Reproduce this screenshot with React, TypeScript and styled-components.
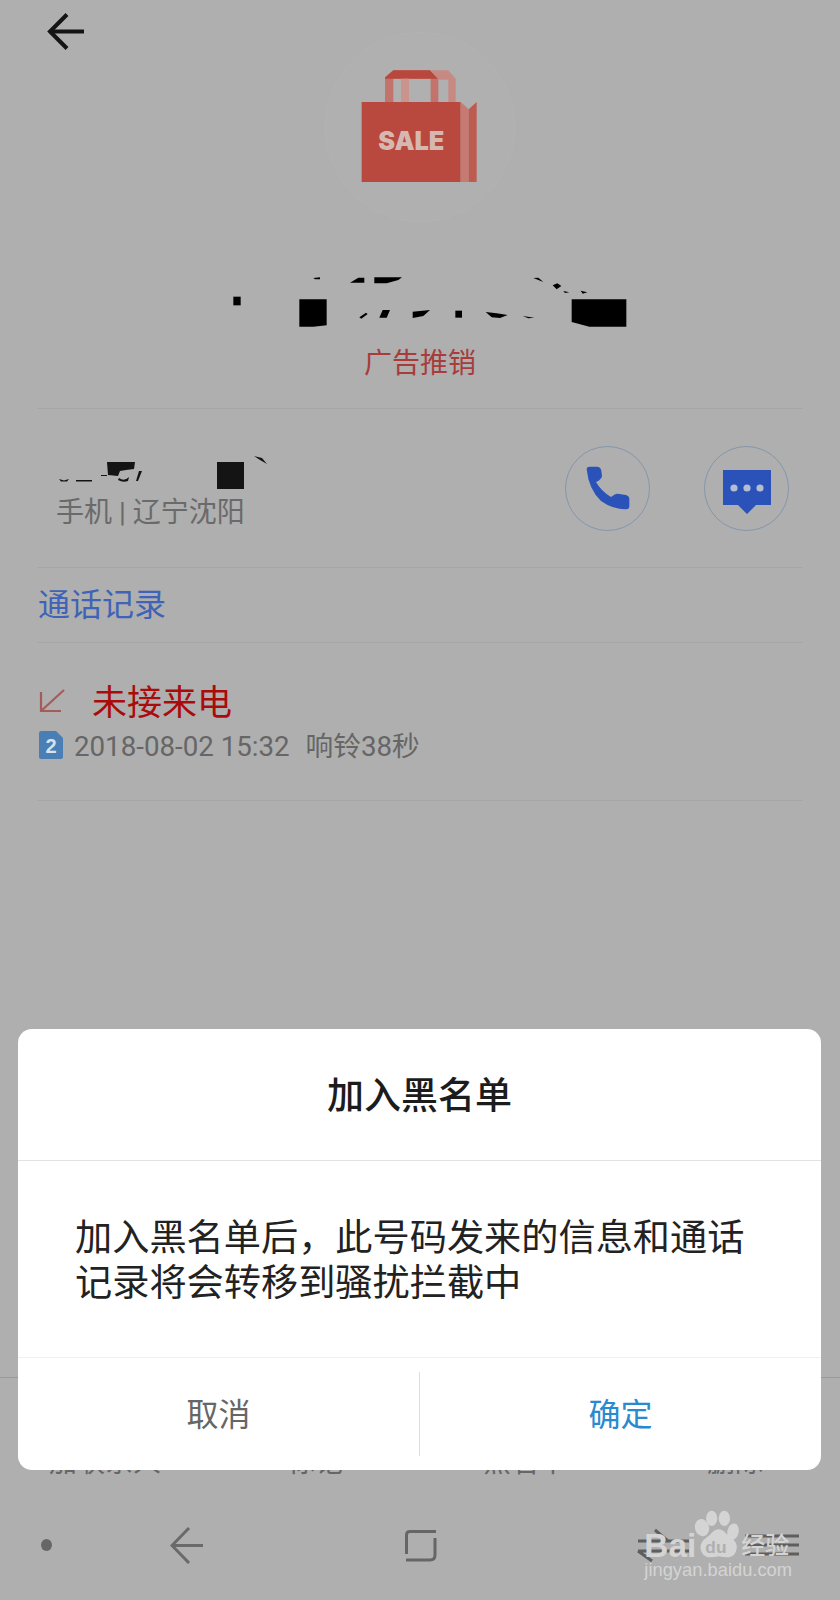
import styled, { createGlobalStyle } from "styled-components";

const GlobalStyle = createGlobalStyle`
  html, body {
    margin: 0;
    padding: 0;
    background: #afafaf;
  }
  * {
    box-sizing: border-box;
  }
`;

const CJK = `Roboto, "Noto Sans CJK SC", sans-serif`;

const Page = styled.div`
  position: relative;
  width: 840px;
  height: 1600px;
  overflow: hidden;
  display: flex;
  flex-direction: column;
  background: #afafaf;
  font-family: ${CJK};
`;
const Hero = styled.header`
  height: 409px;
  margin: 0 37px;
  border-bottom: 1px solid #a6a6a6;
  display: grid;
  grid-template-columns: 1fr 190px 1fr;
  grid-template-rows: 222px 80px auto;
  justify-items: center;
`;
const BackButton = styled.div`
  justify-self: start;
  margin: 13px 0 0 10px;
  width: 38px;
  height: 37px;
`;
const Avatar = styled.div`
  margin-top: 32px;
  width: 190px;
  height: 190px;
  border-radius: 50%;
  background: #b0b0b0;
  border: 1px solid #b3b3b3;
  display: flex;
  align-items: center;
  justify-content: center;
`;
const MaskedNumber = styled.svg`
  grid-column: 1 / 4;
  margin-top: 38px;
  display: block;
`;
const Tag = styled.div`
  grid-column: 1 / 4;
  margin-top: 42px;
  font-size: 28px;
  line-height: 40px;
  color: #a83c3a;
`;
const ContactRow = styled.section`
  height: 159px;
  margin: 0 37px;
  border-bottom: 1px solid #a6a6a6;
  display: flex;
  align-items: center;
  justify-content: space-between;
  padding: 4px 14px 0 19px;
`;
const ContactInfo = styled.div`
  display: flex;
  flex-direction: column;
`;
const Location = styled.div`
  margin-top: 1px;
  font-size: 28px;
  line-height: 36px;
  color: #6a6a6a;
`;
const Actions = styled.div`
  display: flex;
  gap: 54px;
  margin-top: -4px;
`;
const ActionButton = styled.div`
  width: 85px;
  height: 85px;
  border-radius: 50%;
  border: 1px solid #8496ac;
  display: flex;
  align-items: center;
  justify-content: center;
`;
const MessageGlyph = styled.svg`
  margin-top: 7px;
`;
const SectionTitle = styled.div`
  height: 75px;
  margin: 0 37px;
  border-bottom: 1px solid #a6a6a6;
  display: flex;
  align-items: center;
  padding: 0 0 6px 1px;
  font-size: 32px;
  color: #3f63b6;
`;
const Record = styled.section`
  height: 158px;
  margin: 0 37px;
  border-bottom: 1px solid #a6a6a6;
  padding: 37px 0 0 2px;
`;
const MissedLine = styled.div`
  display: flex;
  align-items: center;
  gap: 27px;
  height: 38px;
  font-size: 35px;
  color: #aa0c0c;
`;
const MissedGlyph = styled.svg`
  margin-top: 3px;
`;
const DetailLine = styled.div`
  display: flex;
  align-items: center;
  gap: 11px;
  margin-top: 7px;
  height: 38px;
  font-size: 27.7px;
  color: #666;
`;
const SimGlyph = styled.svg`
  margin-top: 2px;
`;
const Duration = styled.span`
  margin-left: 16px;
`;
const Toolbar = styled.nav`
  margin-top: auto;
  height: 123px;
  border-top: 1px solid #999;
  display: grid;
  grid-template-columns: repeat(4, 1fr);
  padding-top: 70px;
`;
const ToolLabel = styled.div`
  text-align: center;
  font-size: 28px;
  line-height: 30px;
  color: #666;
`;
const NavBar = styled.div`
  height: 100px;
  display: flex;
  align-items: center;
  padding: 0 0 10px 41px;
`;
const NavSlot = styled.div<{ $gap: number }>`
  margin-left: ${(p) => p.$gap}px;
  display: flex;
`;
const NavDot = styled.div`
  width: 11px;
  height: 12px;
  border-radius: 50%;
  background: #666;
`;
const Watermark = styled.svg`
  position: absolute;
  left: 600px;
  top: 1490px;
`;
const Dialog = styled.div`
  position: absolute;
  left: 18px;
  top: 1029px;
  width: 803px;
  height: 441px;
  border-radius: 14px;
  background: #fff;
  display: flex;
  flex-direction: column;
`;
const DialogTitle = styled.h2`
  margin: 0;
  height: 132px;
  border-bottom: 1px solid #e2e2e2;
  display: flex;
  align-items: center;
  justify-content: center;
  padding-bottom: 4px;
  font-size: 37px;
  font-weight: 500;
  color: #1c1c1c;
`;
const DialogBody = styled.p`
  margin: 0;
  height: 197px;
  border-bottom: 1px solid #f0f0f0;
  display: flex;
  align-items: center;
  padding: 3px 57px 0 57px;
  font-size: 37.2px;
  line-height: 45px;
  color: #222;
`;
const DialogFooter = styled.div`
  flex: 1;
  display: flex;
  align-items: center;
`;
const DialogButton = styled.div<{ $primary?: boolean }>`
  flex: 1;
  text-align: center;
  padding-bottom: 4px;
  font-size: 32px;
  color: ${(p) => (p.$primary ? "#2a8ad0" : "#666")};
`;
const FooterDivider = styled.div`
  width: 1px;
  height: 84px;
  background: #dedede;
`;

function BagIcon() {
  return (
    <svg width="120" height="120" viewBox="60 80 360 360">
      <path d="M135 185V110L160 90H270L295 115V185H272V115H207V185H185V115H160V185Z" fill="#c2736b" />
      <path d="M135 112L160 90H270L296 115H135Z" fill="#b8483e" />
      <path d="M270 90H325L347 115V185H325V118H296Z" fill="#c68a83" />
      <path d="M185 115H207V185H185Z" fill="#c9948d" />
      <rect x="65" y="185" width="297" height="240" fill="#b9493e" />
      <path d="M362 185L386 207V425H362Z" fill="#c67a72" />
      <path d="M386 207L410 185V425H386Z" fill="#bd5b51" />
      <text
        x="214"
        y="330"
        textAnchor="middle"
        fontFamily="Inter, sans-serif"
        fontWeight="900"
        fontSize="76"
        fill="#d6b8b1"
      >
        SALE
      </text>
    </svg>
  );
}

function BackIcon() {
  return (
    <svg width="38" height="37" viewBox="0 0 38 37" fill="none" stroke="#141414" strokeWidth="4">
      <path d="M37 18.5H3" />
      <path d="M20 1.5L3 18.5L20 35.5" />
    </svg>
  );
}

function PhoneIcon() {
  return (
    <svg width="44" height="44" viewBox="30 20 132 132">
      <path
        fill="#2a52b8"
        d="M32 30Q32 22 40 22H62Q74 22 76 34L78 50Q78 58 68 64L60 68Q75 95 105 113L115 106Q122 102 130 104L150 107Q160 110 160 120V140Q160 150 150 150Q110 150 75 125Q38 90 32 30Z"
      />
    </svg>
  );
}

function MessageIcon() {
  return (
    <MessageGlyph width="48" height="44" viewBox="0 0 48 44">
      <path fill="#2a52b8" d="M0 0H48V35H33L24 44L15 35H0Z" />
      <circle cx="11" cy="18" r="3.6" fill="#b4bdd2" />
      <circle cx="24" cy="18" r="3.6" fill="#b4bdd2" />
      <circle cx="37" cy="18" r="3.6" fill="#b4bdd2" />
    </MessageGlyph>
  );
}

function MissedIcon() {
  return (
    <MissedGlyph width="26" height="24" viewBox="0 0 26 24" fill="none" stroke="#a65a5a" strokeWidth="2.2">
      <path d="M25 1L2 22" />
      <path d="M2 3V22H22" />
    </MissedGlyph>
  );
}

function SimBadge() {
  return (
    <SimGlyph width="24" height="28" viewBox="0 0 24 28">
      <path fill="#4a7fb6" d="M2 0H17L24 7V26C24 27 23 28 22 28H2C1 28 0 27 0 26V2C0 1 1 0 2 0Z" />
      <text
        x="12"
        y="22"
        textAnchor="middle"
        fontFamily="'Liberation Sans', sans-serif"
        fontWeight="700"
        fontSize="20"
        fill="#d8e2ec"
      >
        2
      </text>
    </SimGlyph>
  );
}

function NavBackIcon() {
  return (
    <svg width="33" height="37" viewBox="0 0 33 37" fill="none" stroke="#6a6a6a" strokeWidth="3">
      <path d="M33 18.5H2" />
      <path d="M19 1L2 18.5L19 36" />
    </svg>
  );
}

function NavRecentIcon() {
  return (
    <svg width="33" height="33" viewBox="0 0 33 33" fill="none" stroke="#666" strokeWidth="3">
      <path d="M32 2.5H6Q2.5 2.5 2.5 6V25" />
      <path d="M2 31H26Q31 31 31 26V9" />
    </svg>
  );
}

function NavSwapIcon() {
  return (
    <svg width="162" height="34" viewBox="0 0 162 34" fill="none" stroke="#5e5e5e" strokeWidth="3">
      <path d="M1 13H52M18 2L31 13" />
      <path d="M1 23H52M1 23L15 33" />
      <path d="M108 8H162M108 17H162M108 26H162" />
    </svg>
  );
}

function BaiduMark() {
  return (
    <Watermark width="240" height="110" viewBox="0 0 720 330">
      <g fill="#d4d4d4">
        <text x="133" y="200" fontFamily="'Liberation Sans', sans-serif" fontWeight="700" fontSize="100">
          Bai
        </text>
        <ellipse cx="306" cy="113" rx="21" ry="26" transform="rotate(-15 306 113)" />
        <ellipse cx="335" cy="85" rx="17" ry="23" />
        <ellipse cx="373" cy="85" rx="17" ry="23" />
        <ellipse cx="399" cy="125" rx="17" ry="25" transform="rotate(12 399 125)" />
        <path d="M356 118C372 118 378 134 394 144C412 156 414 174 406 188C398 204 380 204 356 199C332 204 314 204 306 188C298 174 300 156 318 144C334 134 340 118 356 118Z" />
        <text x="316" y="188" fontFamily="'Liberation Sans', sans-serif" fontWeight="700" fontSize="52" fill="#afafaf">
          du
        </text>
        <text x="424" y="192" fontFamily="'Noto Sans CJK SC', sans-serif" fontWeight="500" fontSize="72">
          经验
        </text>
        <text x="133" y="258" fontFamily="'Liberation Sans', sans-serif" fontSize="55">
          jingyan.baidu.com
        </text>
      </g>
    </Watermark>
  );
}

export default function App() {
  return (
    <Page>
      <GlobalStyle />
      <Hero>
        <BackButton>
          <BackIcon />
        </BackButton>
        <Avatar>
          <BagIcon />
        </Avatar>
        <div />
        <MaskedNumber width="440" height="80" viewBox="0 0 1320 240">
          <path d="M100 110H122V136H100Z" />
          <path d="M298 118H380V196L340 200H298Z" />
          <path d="M1115 118H1279V200H1168L1115 186Z" />
          <path d="M340 54L360 52V58H345Z" />
          <path d="M450 68L475 53H493V68Z" />
          <path d="M523 52H606L595 60L560 70H523Z" />
          <path d="M1000 54L1015 53L1030 66Z" />
          <path d="M1058 76L1072 70L1084 78L1070 88Z" />
          <path d="M1090 93L1108 97L1095 99Z" />
          <path d="M1142 92L1162 97L1148 101Z" />
          <path d="M478 172L498 158L503 162L484 176Z" />
          <path d="M548 150H570L560 173H538Z" />
          <path d="M638 155L690 150L670 168L638 174Z" />
          <path d="M766 152H786V173H766Z" />
          <path d="M857 156L890 160L923 165L900 174L875 172Z" />
          <path d="M968 168L1003 173L985 175Z" />
        </MaskedNumber>
        <Tag>广告推销</Tag>
      </Hero>
      <ContactRow>
        <ContactInfo>
          <svg width="220" height="45" viewBox="0 0 220 45" fill="#141414">
            <path d="M161 13H188V40H161Z" />
            <path d="M51 13H79L78 20L70 21L64 22L62 27L52 26Z" />
            <path d="M63 29Q68 33 73 28L72 32Q67 34 62 31Z" />
            <path d="M83 22H86L82 32H80Z" />
            <path d="M45 26H51V27H45Z" />
            <path d="M20 31H36V32.5H20Z" />
            <path d="M3 30L8 31.5L13 30L11 32.5H5Z" />
            <path d="M198 7L206 9L211 15L204 11Z" />
          </svg>
          <Location>手机 | 辽宁沈阳</Location>
        </ContactInfo>
        <Actions>
          <ActionButton>
            <PhoneIcon />
          </ActionButton>
          <ActionButton>
            <MessageIcon />
          </ActionButton>
        </Actions>
      </ContactRow>
      <SectionTitle>通话记录</SectionTitle>
      <Record>
        <MissedLine>
          <MissedIcon />
          未接来电
        </MissedLine>
        <DetailLine>
          <SimBadge />
          <span>
            2018-08-02 15:32<Duration>响铃38秒</Duration>
          </span>
        </DetailLine>
      </Record>
      <Toolbar>
        <ToolLabel>加联系人</ToolLabel>
        <ToolLabel>标记</ToolLabel>
        <ToolLabel>黑名单</ToolLabel>
        <ToolLabel>删除</ToolLabel>
      </Toolbar>
      <NavBar>
        <NavDot />
        <NavSlot $gap={118}>
          <NavBackIcon />
        </NavSlot>
        <NavSlot $gap={201}>
          <NavRecentIcon />
        </NavSlot>
        <NavSlot $gap={200}>
          <NavSwapIcon />
        </NavSlot>
      </NavBar>
      <BaiduMark />
      <Dialog>
        <DialogTitle>加入黑名单</DialogTitle>
        <DialogBody>加入黑名单后，此号码发来的信息和通话记录将会转移到骚扰拦截中</DialogBody>
        <DialogFooter>
          <DialogButton>取消</DialogButton>
          <FooterDivider />
          <DialogButton $primary>确定</DialogButton>
        </DialogFooter>
      </Dialog>
    </Page>
  );
}
